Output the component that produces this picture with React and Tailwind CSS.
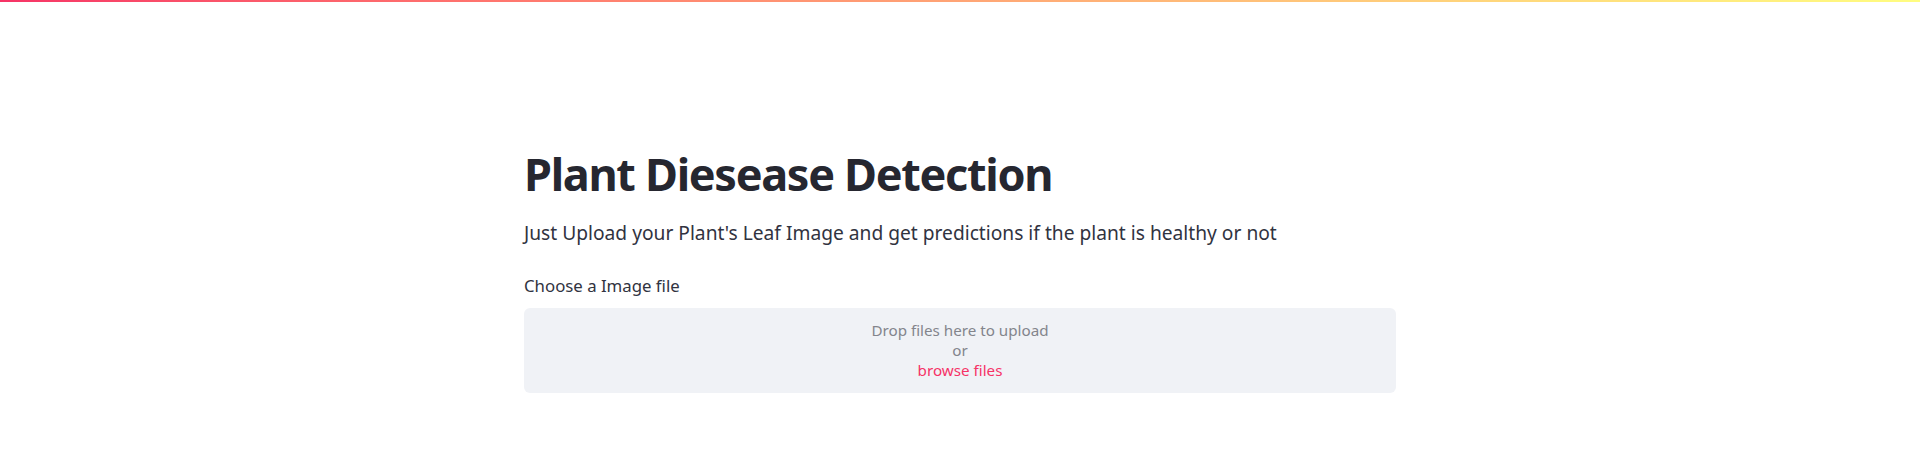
import React from "react";

export default function App() {
  return (
    <div className="min-h-[451px] bg-white font-['Noto_Sans',sans-serif] text-[#31333f]">
      {/* top decoration bar */}
      <div className="h-[2px] w-full bg-gradient-to-r from-[#f63366] to-[#fffd80]" />

      <main className="mx-auto w-[872px] pt-[140px]">
        <h1 className="text-[45px] font-bold leading-[64px] tracking-[-1.3px] text-[#262730]">
          Plant Diesease Detection
        </h1>
        <p className="mt-[12px] text-[19.2px] leading-[1.6]">
          Just Upload your Plant's Leaf Image and get predictions if the plant is healthy or not
        </p>

        <label className="mt-[24px] block text-[16.8px] leading-[1.6]">Choose a Image file</label>
        <div className="mt-[8px] flex h-[85px] flex-col items-center justify-center rounded-[6px] bg-[#f0f2f6] text-[15.2px] leading-[20px]">
          <span className="text-[#83858c]">Drop files here to upload</span>
          <span className="text-[#83858c]">or</span>
          <span className="text-[#f63366]">browse files</span>
        </div>
      </main>
    </div>
  );
}
